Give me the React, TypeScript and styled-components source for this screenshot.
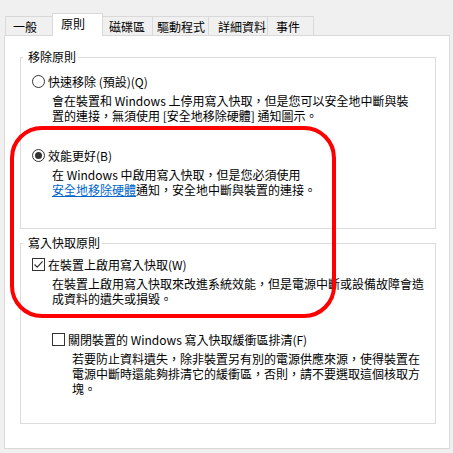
import React from 'react';
import styled, { createGlobalStyle } from 'styled-components';

const GlobalStyle = createGlobalStyle`
    html, body {
        margin: 0;
        padding: 0;
        background: #f0f0f0;
    }
    body {
        font-family: "Noto Sans CJK TC", "Noto Sans", sans-serif;
        font-size: 12px;
        color: #000;
    }
`;

const tabs = [
    { label: '一般', w: 48, pl: 7 },
    { label: '原則', w: 51, pl: 8, active: true },
    { label: '磁碟區', w: 51, pl: 6 },
    { label: '驅動程式', w: 57, pl: 4 },
    { label: '詳細資料', w: 60, pl: 9 },
    { label: '事件', w: 47, pl: 8 },
];

export default function App() {
    return (
        <Window>
            <GlobalStyle />
            <TabStrip>
                {tabs.map(t => (
                    <Tab key={t.label} $w={t.w} $pl={t.pl} $active={!!t.active}>{t.label}</Tab>
                ))}
            </TabStrip>

            <Panel>
                <Group>
                    <Legend>移除原則</Legend>
                    <GroupBody $top={10} $bottom={31}>
                        <Option>
                            <Row>
                                <Radio $checked={false} />
                                <Title>快速移除 (預設)(Q)</Title>
                            </Row>
                            <Desc>
                                會在裝置和 Windows 上停用寫入快取，但是您可以安全地中斷與裝<br />
                                置的連接，無須使用 [安全地移除硬體] 通知圖示。
                            </Desc>
                        </Option>
                        <Option $gap={25}>
                            <Row>
                                <Radio $checked={true} />
                                <Title>效能更好(B)</Title>
                            </Row>
                            <Desc>
                                在 Windows 中啟用寫入快取，但是您必須使用<br />
                                <Link>安全地移除硬體</Link>通知，安全地中斷與裝置的連接。
                            </Desc>
                        </Option>
                    </GroupBody>
                </Group>

                <Group $mt={7}>
                    <Legend>寫入快取原則</Legend>
                    <GroupBody $top={7} $bottom={27}>
                        <Option>
                            <Row>
                                <CheckBox checked={true} />
                                <Title>在裝置上啟用寫入快取(W)</Title>
                            </Row>
                            <Desc>
                                在裝置上啟用寫入快取來改進系統效能，但是電源中斷或設備故障會造<br />
                                成資料的遺失或損毀。
                            </Desc>
                        </Option>
                        <Option $gap={26} $indent={20}>
                            <Row>
                                <CheckBox checked={false} />
                                <Title>關閉裝置的 Windows 寫入快取緩衝區排清(F)</Title>
                            </Row>
                            <Desc>
                                若要防止資料遺失，除非裝置另有別的電源供應來源，使得裝置在<br />
                                電源中斷時還能夠排清它的緩衝區，否則，請不要選取這個核取方<br />
                                塊。
                            </Desc>
                        </Option>
                    </GroupBody>
                </Group>
            </Panel>

            <Highlight />
        </Window>
    );
}

const CheckBox: React.FC<{ checked: boolean }> = ({ checked }) => (
    <Box>
        {checked && (
            <svg width="11" height="11" viewBox="0 0 11 11">
                <path d="M1.5 5.5 L4.2 8.2 L9.6 2.4" fill="none" stroke="#333" strokeWidth="1.2" />
            </svg>
        )}
    </Box>
);

const Window = styled.div`
    position: relative;
    width: 453px;
    height: 453px;
    box-sizing: border-box;
    padding-top: 13px;
    background: #f0f0f0;
    overflow: hidden;
`;

const TabStrip = styled.div`
    display: flex;
    align-items: flex-end;
    height: 22px;
    padding-left: 5px;
    position: relative;
    z-index: 1;
`;

const Tab = styled.div<{ $w: number; $pl: number; $active: boolean }>`
    box-sizing: border-box;
    width: ${p => p.$w}px;
    height: ${p => (p.$active ? 23 : 19)}px;
    margin-left: -1px;
    margin-bottom: ${p => (p.$active ? -1 : 0)}px;
    padding-left: ${p => p.$pl}px;
    padding-top: ${p => (p.$active ? 2 : 2)}px;
    border: 1px solid #d9d9d9;
    border-bottom: none;
    background: ${p => (p.$active ? '#fff' : '#f0f0f0')};
    line-height: 15px;
    white-space: nowrap;
    position: relative;
    z-index: ${p => (p.$active ? 2 : 1)};
    &:first-child {
        margin-left: 0;
    }
`;

const Panel = styled.div`
    box-sizing: border-box;
    margin-left: 4px;
    width: 446px;
    height: 414px;
    padding: 14px 13px 0 15px;
    background: #fff;
    border: 1px solid #d9d9d9;
`;

const Group = styled.fieldset<{ $mt?: number }>`
    margin: ${p => p.$mt ?? 0}px 0 0 0;
    padding: 0;
    width: 416px;
    box-sizing: border-box;
    border: 1px solid #dcdcdc;
    min-inline-size: 0;
`;

const Legend = styled.legend`
    margin-left: 2px;
    padding: 0 2px 0 5px;
    line-height: 14px;
    color: #000;
`;

const GroupBody = styled.div<{ $top: number; $bottom: number }>`
    padding: ${p => p.$top}px 0 ${p => p.$bottom}px 11px;
    display: flex;
    flex-direction: column;
`;

const Option = styled.div<{ $gap?: number; $indent?: number }>`
    display: flex;
    flex-direction: column;
    gap: 4px;
    margin-top: ${p => p.$gap ?? 0}px;
    margin-left: ${p => p.$indent ?? 0}px;
`;

const Row = styled.div`
    display: flex;
    align-items: center;
    gap: 3px;
    height: 15px;
`;

const Title = styled.span`
    line-height: 15px;
    white-space: nowrap;
`;

const Radio = styled.span<{ $checked: boolean }>`
    box-sizing: border-box;
    width: 13px;
    height: 13px;
    border: 1px solid #333;
    border-radius: 50%;
    display: flex;
    align-items: center;
    justify-content: center;
    flex-shrink: 0;
    &::after {
        content: '';
        display: ${p => (p.$checked ? 'block' : 'none')};
        width: 7px;
        height: 7px;
        border-radius: 50%;
        background: #333;
    }
`;

const Box = styled.span`
    box-sizing: border-box;
    width: 13px;
    height: 13px;
    border: 1px solid #333;
    display: flex;
    align-items: center;
    justify-content: center;
    flex-shrink: 0;
`;

const Desc = styled.div`
    padding-left: 20px;
    line-height: 15px;
    white-space: nowrap;
`;

const Link = styled.span`
    color: #0066cc;
    text-decoration: underline;
`;

const Highlight = styled.div`
    position: absolute;
    left: 10px;
    top: 126px;
    width: 326px;
    height: 192px;
    box-sizing: border-box;
    border: 4px solid #f00;
    border-radius: 32px;
    pointer-events: none;
`;
